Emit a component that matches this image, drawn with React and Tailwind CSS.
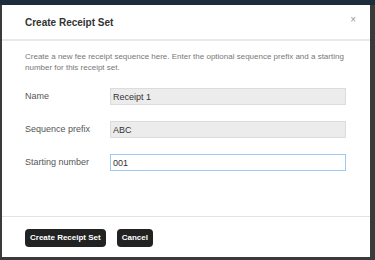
import { useState } from "react";

const font = { fontFamily: '"Comic Sans MS", "Liberation Sans", "DejaVu Sans", sans-serif' };

function Field({ label, value, focused, onChange }) {
  return (
    <div className="flex items-center">
      <label className="w-[85px] text-[9px] text-[#555]">{label}</label>
      <input
        value={value}
        onChange={onChange}
        readOnly={!onChange}
        autoFocus={focused}
        className={
          focused
            ? "w-[236px] h-[17px] px-[2px] text-[9px] text-[#333] bg-white border border-[#9ecbf2] outline-none"
            : "w-[236px] h-[17px] px-[2px] text-[9px] text-[#333] bg-[#ececec] border border-[#dcdcdc] outline-none"
        }
      />
    </div>
  );
}

export default function App() {
  const [start, setStart] = useState("001");

  return (
    <div className="w-[375px] h-[260px] bg-[#3a3a3a] pl-[2px] pr-[5px] pb-[3px] overflow-hidden" style={font}>
      <div className="h-[5px] -ml-[2px] -mr-[5px] bg-[#1d2d3c]" />
      <div className="h-[252px] bg-white flex flex-col">
        <div className="h-[36px] flex items-center justify-between pl-[23px] pr-[14px] border-b-2 border-[#e8e8e8]">
          <span className="text-[10px] font-bold text-[#333]">Create Receipt Set</span>
          <span className="text-[10px] text-[#999] -mt-[6px]">×</span>
        </div>
        <div className="flex-1 pl-[23px] pr-[20px] pt-[10px] border-b border-[#e3e3e3]">
          <p className="text-[8px] leading-[11px] text-[#777] mb-[15px]">
            Create a new fee receipt sequence here. Enter the optional sequence prefix and a starting number for this receipt set.
          </p>
          <div className="flex flex-col gap-[16px]">
            <Field label="Name" value="Receipt 1" />
            <Field label="Sequence prefix" value="ABC" />
            <Field label="Starting number" value={start} focused onChange={(e) => setStart(e.target.value)} />
          </div>
        </div>
        <div className="h-[40px] flex items-center gap-[11px] pl-[23px] pt-[2px]">
          <button className="h-[18px] px-[5px] rounded-[4px] bg-[#222] text-white text-[8px] font-bold">
            Create Receipt Set
          </button>
          <button className="h-[18px] px-[5px] rounded-[4px] bg-[#222] text-white text-[8px] font-bold">
            Cancel
          </button>
        </div>
      </div>
    </div>
  );
}
